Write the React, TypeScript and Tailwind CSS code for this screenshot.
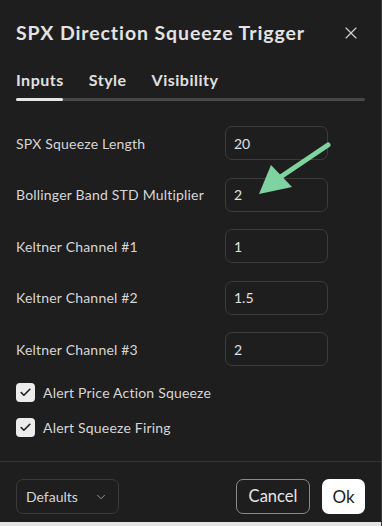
import { X, ChevronDown, Check } from "lucide-react";

const fields = [
  { label: "SPX Squeeze Length", value: "20" },
  { label: "Bollinger Band STD Multiplier", value: "2" },
  { label: "Keltner Channel #1", value: "1" },
  { label: "Keltner Channel #2", value: "1.5" },
  { label: "Keltner Channel #3", value: "2" },
];

const alerts = ["Alert Price Action Squeeze", "Alert Squeeze Firing"];

export default function App() {
  return (
    <div
      className="relative w-[382px] h-[526px] bg-[#1e1e1e] text-[#dcdcdc] flex flex-col overflow-hidden border-r border-[#3a3a3a]"
      style={{ fontFamily: "Lato, 'Noto Sans', sans-serif" }}
    >
      {/* Header */}
      <div className="flex items-center justify-between pl-4 pr-[20px] pt-[19px] h-[47px]">
        <h1 className="text-[19.5px] font-bold text-[#e3e3e3] tracking-[0.9px]">SPX Direction Squeeze Trigger</h1>
        <X className="w-[20px] h-[20px] text-[#cfcfcf]" strokeWidth={1.4} />
      </div>

      {/* Tabs */}
      <div className="px-4 mt-[21px]">
        <div className="flex gap-[25px] text-[16px] font-bold text-[#e0e0e0] h-[24px] items-center tracking-[0.5px]">
          <span>Inputs</span>
          <span>Style</span>
          <span>Visibility</span>
        </div>
        <div className="mt-[6px] h-[3px] rounded-full bg-[#474747] flex">
          <div className="w-[47px] h-full rounded-full bg-[#e6e6e6]" />
        </div>
      </div>

      {/* Inputs */}
      <div className="px-4 mt-[25px] flex flex-col gap-[17.5px]">
        {fields.map((f) => (
          <div key={f.label} className="flex items-center h-[34px]">
            <span className="w-[209px] text-[14px] text-[#d6d6d6] tracking-[0.2px]">{f.label}</span>
            <div className="w-[103px] h-[34px] rounded-[7px] border border-[#3c3c3c] flex items-center px-[8px] text-[14px] text-[#e0e0e0]">
              {f.value}
            </div>
          </div>
        ))}
      </div>

      {/* Checkboxes */}
      <div className="px-4 mt-[17px] flex flex-col gap-[16px]">
        {alerts.map((a) => (
          <div key={a} className="flex items-center gap-[8px] h-[19px]">
            <div className="w-[19px] h-[19px] rounded-[4px] bg-[#ececec] flex items-center justify-center">
              <Check className="w-[13px] h-[13px] text-[#1e1e1e]" strokeWidth={3} />
            </div>
            <span className="text-[14px] text-[#d6d6d6] tracking-[0.2px]">{a}</span>
          </div>
        ))}
      </div>

      {/* Footer */}
      <div className="mt-[24px] border-t border-[#363636] flex items-center justify-between px-4 pt-[17px]">
        <div className="w-[103px] h-[35px] rounded-[7px] border border-[#3a3a3a] flex items-center justify-between pl-[9px] pr-[10px] text-[14px] text-[#d6d6d6]">
          <span>Defaults</span>
          <ChevronDown className="w-[14px] h-[14px] text-[#a0a0a0]" strokeWidth={1.6} />
        </div>
        <div className="flex gap-[12px]">
          <button className="w-[74px] h-[35px] rounded-[7px] border border-[#8a8a8a] text-[16.5px] text-[#e6e6e6]">
            Cancel
          </button>
          <button className="w-[43px] h-[35px] rounded-[7px] bg-white text-[17px] text-[#1e1e1e]">
            Ok
          </button>
        </div>
      </div>

      <div className="mt-auto h-[4px] bg-[#e4e4e4]" />

      {/* Annotation arrow */}
      <svg className="absolute left-0 top-0 pointer-events-none" width="382" height="526">
        <line x1="328" y1="145" x2="279" y2="178" stroke="#7fd3a0" strokeWidth="5" strokeLinecap="round" />
        <polygon points="259,194 271,165 292,187" fill="#7fd3a0" />
      </svg>
    </div>
  );
}
